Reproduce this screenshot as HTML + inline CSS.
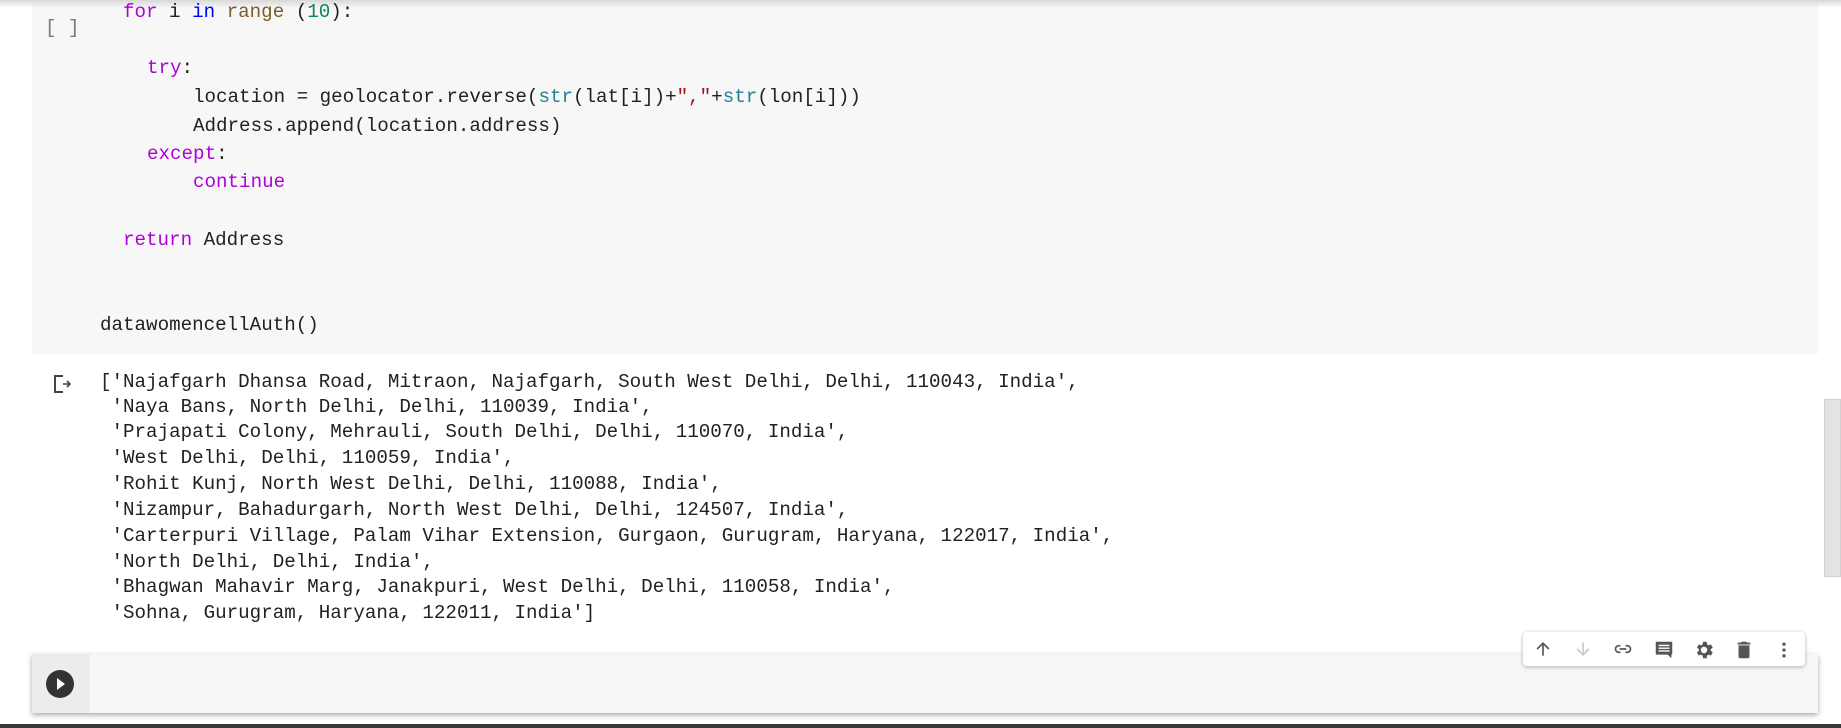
<!DOCTYPE html>
<html><head><meta charset="utf-8"><style>
*{margin:0;padding:0;box-sizing:border-box}
body{width:1841px;height:728px;background:#fff;position:relative;overflow:hidden;font-family:"Liberation Mono",monospace;color:#212121}
.topsh{position:absolute;left:0;top:0;width:1841px;height:8px;background:linear-gradient(#d8d8d8,rgba(255,255,255,0))}
.cell{position:absolute;left:32px;top:0;width:1786px;height:354px;background:#f7f7f7}
.l{position:absolute;font-size:19.2px;white-space:pre;line-height:24px}
.k{color:#af00db}.b{color:#0000ff}.f{color:#795e26}.n{color:#098658}.s{color:#267f99}.r{color:#a31515}
.o{position:absolute;left:100px;font-size:19.2px;white-space:pre;line-height:24px;color:#212121}
.c2{position:absolute;left:32px;top:654px;width:1786px;height:59px;background:#f7f7f7;box-shadow:0 2px 5px rgba(0,0,0,.35)}
.c2 .g{position:absolute;left:0;top:0;width:58px;height:59px;background:#ececec}
.tb{position:absolute;left:1523px;top:632px;width:282px;height:34px;background:#fff;border-radius:4px;box-shadow:0 1px 4px rgba(0,0,0,.3)}
.tb svg{position:absolute;top:7px}
</style></head><body>
<div class="cell"></div>
<div class="topsh"></div>
<div class="l" style="left:45px;top:16px;color:#777">[ ]</div>
<div class="l" style="left:123px;top:0px"><span class="k">for</span> i <span class="b">in</span> <span class="f">range</span> (<span class="n">10</span>):</div>
<div class="l" style="left:147px;top:56px"><span class="k">try</span>:</div>
<div class="l" style="left:193px;top:85px">location = geolocator.reverse(<span class="s">str</span>(lat[i])+<span class="r">","</span>+<span class="s">str</span>(lon[i]))</div>
<div class="l" style="left:193px;top:114px">Address.append(location.address)</div>
<div class="l" style="left:147px;top:142px"><span class="k">except</span>:</div>
<div class="l" style="left:193px;top:170px"><span class="k">continue</span></div>
<div class="l" style="left:123px;top:228px"><span class="k">return</span> Address</div>
<div class="l" style="left:100px;top:313px">datawomencellAuth()</div>

<svg style="position:absolute;left:52px;top:373px" width="22" height="22" viewBox="0 0 22 22"><path d="M2 2h9v2H4v14h7v2H2z" fill="#444"/><path d="M11 11h6M15 8l3 3-3 3" stroke="#444" stroke-width="1.6" fill="none"/></svg>
<div class="o" style="top:370px">['Najafgarh Dhansa Road, Mitraon, Najafgarh, South West Delhi, Delhi, 110043, India',</div>
<div class="o" style="top:395px"> 'Naya Bans, North Delhi, Delhi, 110039, India',</div>
<div class="o" style="top:420px"> 'Prajapati Colony, Mehrauli, South Delhi, Delhi, 110070, India',</div>
<div class="o" style="top:446px"> 'West Delhi, Delhi, 110059, India',</div>
<div class="o" style="top:472px"> 'Rohit Kunj, North West Delhi, Delhi, 110088, India',</div>
<div class="o" style="top:498px"> 'Nizampur, Bahadurgarh, North West Delhi, Delhi, 124507, India',</div>
<div class="o" style="top:524px"> 'Carterpuri Village, Palam Vihar Extension, Gurgaon, Gurugram, Haryana, 122017, India',</div>
<div class="o" style="top:550px"> 'North Delhi, Delhi, India',</div>
<div class="o" style="top:575px"> 'Bhagwan Mahavir Marg, Janakpuri, West Delhi, Delhi, 110058, India',</div>
<div class="o" style="top:601px"> 'Sohna, Gurugram, Haryana, 122011, India']</div>

<div class="c2"><div class="g"></div>
<svg style="position:absolute;left:13px;top:15px" width="30" height="30" viewBox="0 0 30 30"><circle cx="15" cy="15" r="14" fill="#333"/><path d="M12 9l8 6-8 6z" fill="#fff"/></svg></div>
<div class="tb">
<svg style="left:10px" width="20" height="20" viewBox="0 0 24 24"><path d="M12 20V5M5 12l7-7 7 7" stroke="#555" stroke-width="2" fill="none"/></svg>
<svg style="left:50px" width="20" height="20" viewBox="0 0 24 24"><path d="M12 4v15M5 12l7 7 7-7" stroke="#c8c8c8" stroke-width="2" fill="none"/></svg>
<svg style="left:89px" width="22" height="20" viewBox="0 0 24 24"><path d="M9 8H7a4 4 0 000 8h2M15 8h2a4 4 0 010 8h-2M8 12h8" stroke="#555" stroke-width="2" fill="none"/></svg>
<svg style="left:130px" width="22" height="22" viewBox="0 0 24 24"><path d="M3 3h18v14h-1v4l-4-4H3z" fill="#555"/><path d="M6 7h12M6 10h12M6 13h12" stroke="#fff" stroke-width="1.5"/></svg>
<svg style="left:170px" width="22" height="22" viewBox="0 0 24 24"><path d="M19.4 13a7.5 7.5 0 000-2l2.1-1.6-2-3.5-2.5 1a7 7 0 00-1.7-1L14.9 3h-4l-.4 2.9a7 7 0 00-1.700 1l-2.5-1-2 3.5L6.4 11a7.5 7.5 0 000 2l-2.1 1.6 2 3.5 2.5-1a7 7 0 001.7 1l.4 2.9h4l.4-2.9a7 7 0 001.7-1l2.5 1 2-3.5zM12 15.5a3.5 3.5 0 110-7 3.5 3.5 0 010 7z" fill="#555"/></svg>
<svg style="left:210px" width="22" height="22" viewBox="0 0 24 24"><path d="M6 19a2 2 0 002 2h8a2 2 0 002-2V7H6zM19 4h-3.5l-1-1h-5l-1 1H5v2h14z" fill="#555"/></svg>
<svg style="left:251px" width="20" height="22" viewBox="0 0 24 24"><circle cx="12" cy="5" r="2" fill="#555"/><circle cx="12" cy="12" r="2" fill="#555"/><circle cx="12" cy="19" r="2" fill="#555"/></svg>
</div>
<div style="position:absolute;left:1824px;top:399px;width:17px;height:178px;background:#e3e3e3;border:1px solid #d0d0d0"></div>
<div style="position:absolute;left:0;top:724px;width:1841px;height:4px;background:#3a3a3a"></div>
</body></html>
